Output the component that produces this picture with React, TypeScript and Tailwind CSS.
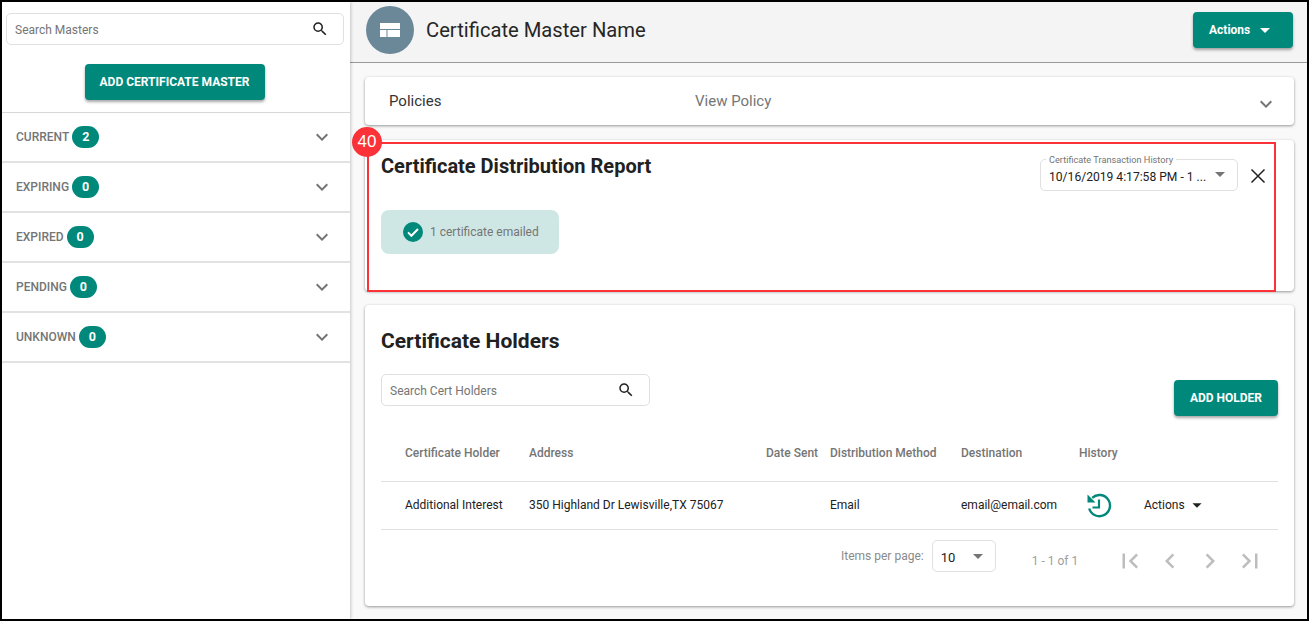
import type { ReactNode } from 'react';

const paths = {
  search:
    'M15.5 14h-.79l-.28-.27A6.471 6.471 0 0 0 16 9.5 6.5 6.5 0 1 0 9.5 16c1.61 0 3.09-.59 4.23-1.57l.27.28v.79l5 4.99L20.49 19l-4.99-5zm-6 0C7.01 14 5 11.99 5 9.5S7.01 5 9.5 5 14 7.01 14 9.5 11.99 14 9.5 14z',
  expand: 'M16.59 8.59L12 13.17 7.41 8.59 6 10l6 6 6-6z',
  first: 'M18.41 16.59L13.82 12l4.59-4.59L17 6l-6 6 6 6zM6 6h2v12H6z',
  prev: 'M15.41 7.41L14 6l-6 6 6 6 1.41-1.41L10.83 12z',
  next: 'M10 6L8.59 7.41 13.17 12l-4.58 4.58L10 18l6-6z',
  last: 'M5.59 7.41L10.18 12l-4.59 4.59L7 18l6-6-6-6zM16 6h2v12h-2z',
  caret: 'M7 10l5 5 5-5z',
};

const Icon = ({ d, className }: { d: string; className: string }) => (
  <svg viewBox="0 0 24 24" fill="currentColor" className={className} aria-hidden="true">
    <path d={d} />
  </svg>
);

const SearchBox = ({ placeholder, className }: { placeholder: string; className: string }) => (
  <div className={`flex items-center justify-between rounded-[5px] border border-[#e0e0e0] bg-white pl-2 pr-[14px] ${className}`}>
    <span className="pt-[1px] text-[12px] text-[#757575]">{placeholder}</span>
    <Icon d={paths.search} className="h-[18px] w-[18px] text-[#212121]" />
  </div>
);

const groups = [
  { label: 'CURRENT', count: 2 },
  { label: 'EXPIRING', count: 0 },
  { label: 'EXPIRED', count: 0 },
  { label: 'PENDING', count: 0 },
  { label: 'UNKNOWN', count: 0 },
];

const Sidebar = () => (
  <aside className="z-10 flex h-full w-[348px] shrink-0 flex-col bg-white shadow-[1px_0_3px_rgba(0,0,0,0.2)]">
    <div className="px-1 pt-[11px]">
      <SearchBox placeholder="Search Masters" className="h-[32px] w-[338px]" />
    </div>
    <div className="flex justify-center pr-[3px] pt-[19px]">
      <button className="h-[36px] w-[180px] rounded-[4px] bg-[#00897b] text-[12px] font-bold text-white shadow-[0_2px_3px_rgba(0,0,0,0.35)]">
        ADD CERTIFICATE MASTER
      </button>
    </div>
    <div className="mt-[12px] border-t border-[#d8d8d8]">
      {groups.map((g) => (
        <div key={g.label} className="flex h-[50px] items-center justify-between border-b-2 border-[#e2e2e2] pl-[14px] pr-[16px]">
          <div className="flex items-center gap-[3px]">
            <span className="text-[12px] font-medium text-[#757575]">{g.label}</span>
            <span className="flex h-[22px] w-[27px] items-center justify-center rounded-full bg-[#00897b] text-[12.5px] font-bold text-white">
              {g.count}
            </span>
          </div>
          <Icon d={paths.expand} className="h-[24px] w-[24px] text-[#757575]" />
        </div>
      ))}
    </div>
  </aside>
);

const Header = () => (
  <header className="flex h-[61px] shrink-0 items-center justify-between border-b border-[#9a9a9a] bg-[#f4f4f4] pb-[4px] pl-[16px] pr-[14px]">
    <div className="flex items-center gap-[12px]">
      <div className="flex h-[48px] w-[48px] items-center justify-center rounded-full bg-[#6b8899]">
        <svg viewBox="0 0 20 14" className="h-[14px] w-[20px]" fill="white" aria-hidden="true">
          <rect x="0" y="0" width="20" height="6" />
          <rect x="0" y="7" width="6.5" height="7" />
          <rect x="7.5" y="7" width="12.5" height="7" />
        </svg>
      </div>
      <h1 className="text-[20.2px] text-[#262626]">Certificate Master Name</h1>
    </div>
    <button className="flex h-[36px] w-[100px] items-center gap-[3px] rounded-[4px] bg-[#00897b] pl-[16px] text-[12px] font-bold text-white shadow-[0_2px_3px_rgba(0,0,0,0.35)]">
      Actions
      <Icon d={paths.caret} className="h-[24px] w-[24px]" />
    </button>
  </header>
);

const Card = ({ className, children }: { className: string; children: ReactNode }) => (
  <section className={`relative rounded-[4px] bg-white shadow-[0_1px_3px_rgba(0,0,0,0.4)] ${className}`}>{children}</section>
);

const columns = ['Certificate Holder', 'Address', 'Date Sent', 'Distribution Method', 'Destination', 'History', ''];
const gridCols = 'grid grid-cols-[124px_237px_64px_131px_118px_65px_1fr] items-center pl-[24px]';

const HistoryIcon = () => (
  <svg viewBox="0 0 24 24" className="h-[24px] w-[24px] overflow-visible text-[#00897b]" fill="none" stroke="currentColor" aria-hidden="true">
    <path d="M5.2 4.8A10.6 10.6 0 1 1 2.2 15.5" strokeWidth="2.4" />
    <path d="M0.5 1.5V9.5H8.5z" fill="currentColor" stroke="none" />
    <path d="M12 6.5V14.5H5.5" strokeWidth="2.2" />
  </svg>
);

const Holders = () => (
  <Card className="mt-[14px] h-[301px] px-[16px]">
    <h2 className="pt-[23px] text-[21px] font-bold leading-[26px] text-[#212121]">Certificate Holders</h2>
    <div className="flex items-start justify-between">
      <SearchBox placeholder="Search Cert Holders" className="mt-[20px] h-[32px] w-[269px]" />
      <button className="mt-[26px] h-[36px] w-[104px] rounded-[4px] bg-[#00897b] text-[12px] font-bold text-white shadow-[0_2px_3px_rgba(0,0,0,0.35)]">
        ADD HOLDER
      </button>
    </div>
    <div className={`${gridCols} mt-[15px] h-[51px] border-b border-[#e0e0e0] pb-[6px] text-[12px] font-medium text-[#757575]`}>
      {columns.map((c) => (
        <span key={c} className="whitespace-nowrap">
          {c}
        </span>
      ))}
    </div>
    <div className={`${gridCols} h-[48px] border-b border-[#e0e0e0] pb-[2px] text-[12px] text-[#212121]`}>
      <span>Additional Interest</span>
      <span>350 Highland Dr Lewisville,TX 75067</span>
      <span />
      <span>Email</span>
      <span>email@email.com</span>
      <span className="pl-[8px]">
        <HistoryIcon />
      </span>
      <span className="flex items-center gap-[1px]">
        Actions
        <Icon d={paths.caret} className="h-[22px] w-[22px]" />
      </span>
    </div>
    <div className="flex items-start">
      <span className="ml-[460px] mt-[17px] text-[12px] text-[#8a8a8a]">Items per page:</span>
      <div className="ml-[8px] mt-[10px] flex h-[32px] w-[64px] items-start justify-between rounded-[5px] border border-[#e0e0e0] pl-[8px] pr-[5px] pt-[7px] text-[13px] text-[#212121]">
        <span>10</span>
        <Icon d={paths.caret} className="-mt-[4px] h-[24px] w-[24px] text-[#757575]" />
      </div>
      <span className="ml-[36px] mt-[22px] text-[12px] text-[#9e9e9e]">1 - 1 of 1</span>
      <div className="ml-[37px] mt-[16px] flex gap-[10px] text-[#bdbdbd]">
        <Icon d={paths.first} className="h-[30px] w-[30px]" />
        <Icon d={paths.prev} className="h-[30px] w-[30px]" />
        <Icon d={paths.next} className="h-[30px] w-[30px]" />
        <Icon d={paths.last} className="h-[30px] w-[30px]" />
      </div>
    </div>
  </Card>
);

const Report = () => (
  <Card className="mt-[15px] h-[151px] px-[16px]">
    <div className="flex items-start justify-between">
      <h2 className="pt-[13px] text-[20px] font-bold leading-[26px] text-[#212121]">Certificate Distribution Report</h2>
      <div className="flex items-start gap-[8px] pr-[8px] pt-[19px]">
        <div className="relative flex h-[32px] w-[198px] items-center justify-between rounded-[5px] border border-[#e0e0e0] pl-[8px] pr-[5px] pt-[5px]">
          <span className="absolute -top-[6px] left-[5px] bg-white px-[3px] text-[9.2px] leading-[11px] text-[#757575]">
            Certificate Transaction History
          </span>
          <span className="whitespace-nowrap text-[12.1px] text-[#212121]">10/16/2019 4:17:58 PM - 1 ...</span>
          <Icon d={paths.caret} className="-mt-[8px] h-[24px] w-[24px] text-[#757575]" />
        </div>
        <svg viewBox="0 0 24 24" className="mt-[5px] h-[24px] w-[24px] text-[#212121]" fill="none" stroke="currentColor" strokeWidth="1.5" aria-hidden="true">
          <path d="M5.5 5.5l13 13M18.5 5.5l-13 13" />
        </svg>
      </div>
    </div>
    <div className="mt-[19px] flex h-[44px] w-[178px] items-center gap-[7px] rounded-[8px] bg-[#cfe7e4] pl-[22px]">
      <svg viewBox="0 0 20 20" className="h-[20px] w-[20px]" aria-hidden="true">
        <circle cx="10" cy="10" r="10" fill="#00897b" />
        <path d="M5 10.4l3.4 3.4 6.6-6.8" fill="none" stroke="white" strokeWidth="2" />
      </svg>
      <span className="text-[12px] text-[#757575]">1 certificate emailed</span>
    </div>
    {/* Annotation over the card */}
    <div className="pointer-events-none absolute left-[2px] top-[2px] h-[150px] w-[909px] border-2 border-[#fb3237]" />
    <div className="absolute -left-[13px] -top-[13px] flex h-[30px] w-[30px] items-center justify-center rounded-full bg-[#fb3237] text-[17px] text-white [font-family:'Liberation_Sans',sans-serif]">
      40
    </div>
  </Card>
);

export default function App() {
  return (
    <div className="flex h-[621px] w-[1309px] overflow-hidden border-2 border-black bg-white [font-family:Roboto,sans-serif]">
      <Sidebar />
      <main className="flex min-w-0 flex-1 flex-col bg-[#f9f9f9]">
        <Header />
        <div className="pl-[15px] pr-[13px] pt-[14px]">
          <Card className="flex h-[48px] items-center pl-[24px] pr-[16px] text-[15px]">
            <span className="w-[306px] pt-[1px] text-[#333333]">Policies</span>
            <span className="flex-1 pt-[1px] text-[#757575]">View Policy</span>
            <Icon d={paths.expand} className="mt-[6px] h-[24px] w-[24px] text-[#757575]" />
          </Card>
          <Report />
          <Holders />
        </div>
      </main>
    </div>
  );
}
